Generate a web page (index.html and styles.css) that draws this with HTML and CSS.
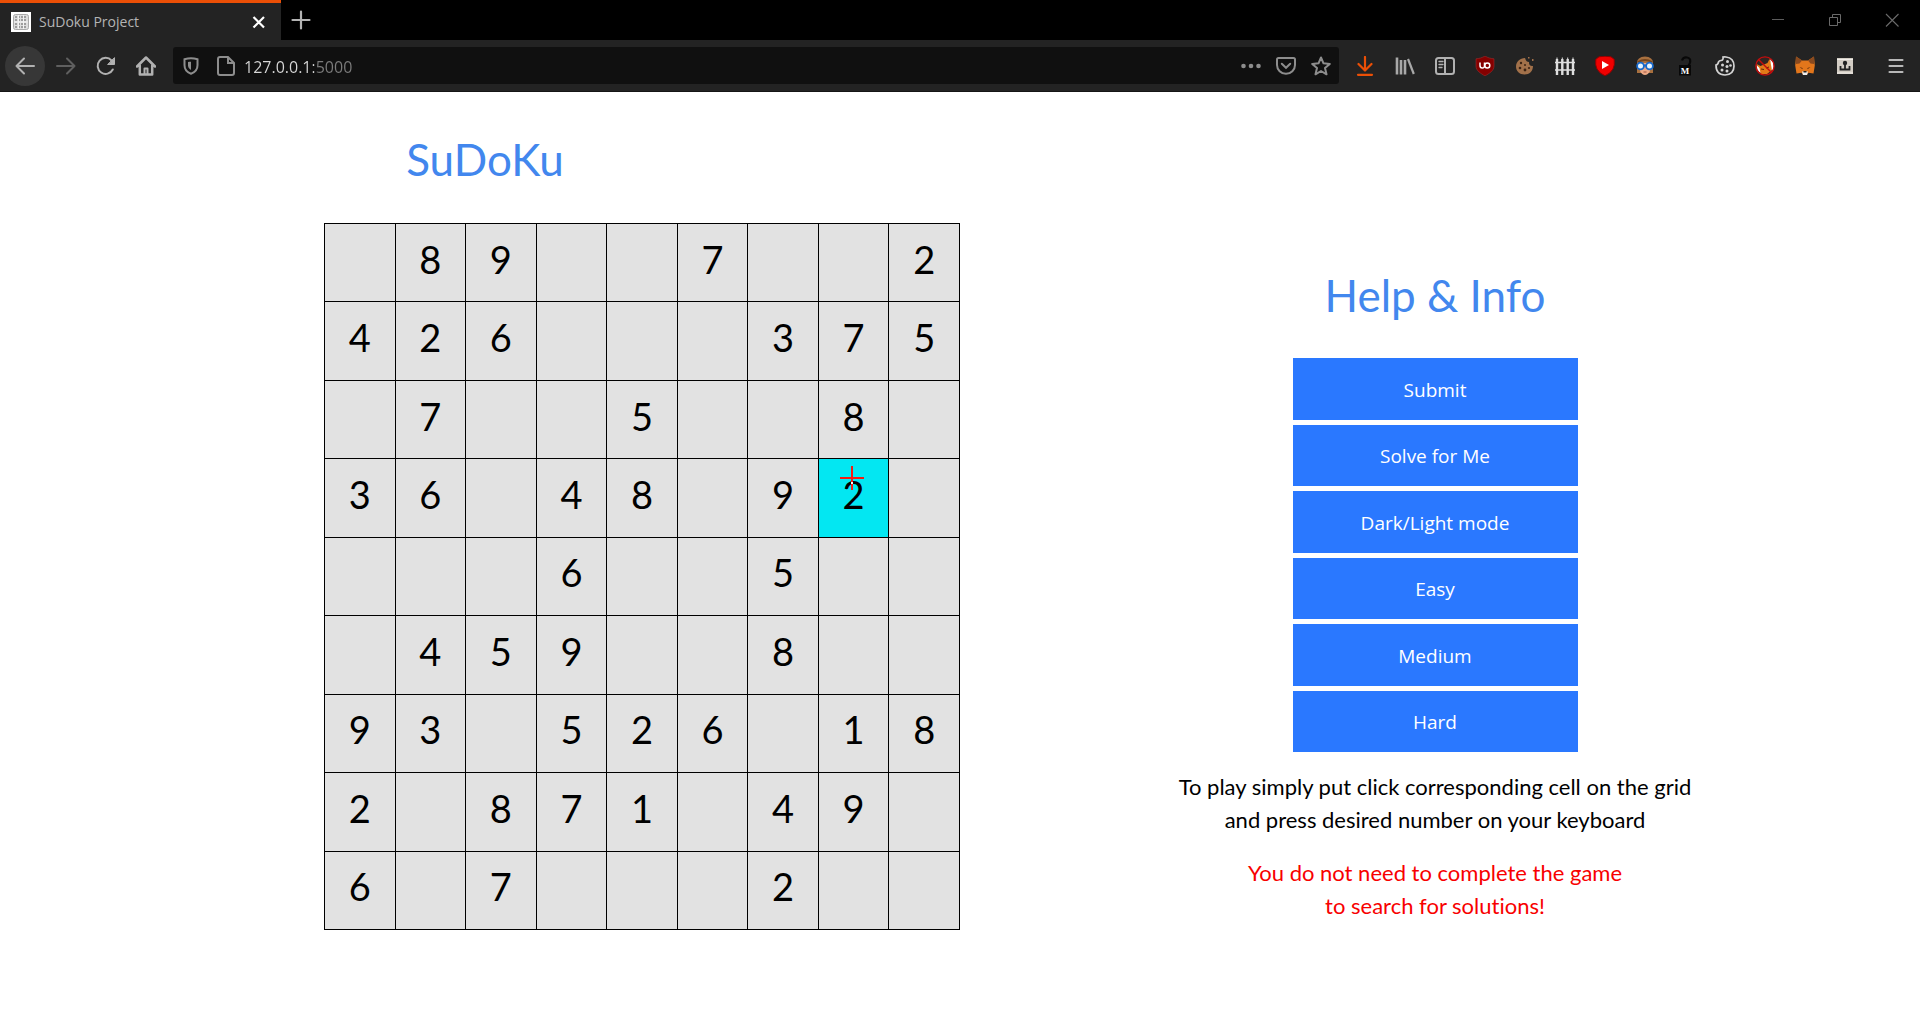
FILE: index.html
```html
<!DOCTYPE html>
<html lang="en">
<head>
<meta charset="utf-8">
<title>SuDoku Project</title>
<link rel="stylesheet" href="styles.css">
</head>
<body>
<header class="browser">
  <div class="tabbar">
    <div class="tab">
      <svg class="icon" viewBox="0 0 20 20"><path fill="#fff" d="M0 0h20v20H0z"/><rect x="2.5" y="2.5" width="15" height="15" rx="2" fill="#ddd" stroke="#aaa"/><path d="M4 5h12M4 8h12M4 12h12M4 15h12" stroke="#888" stroke-width="1.5" stroke-dasharray="2 1"/><path d="M7.5 3v14M12.500 3v14M3 10h14" stroke="#f4f4f4"/></svg>
      <span class="tab-title">SuDoku Project</span>
      <button class="bare" aria-label="Close tab"><svg class="icon" viewBox="0 0 20 20"><path d="M4.500 5 15 15.500M15 5 4.500 15.500" stroke="#fff" stroke-width="2.200" fill="none"/></svg></button>
    </div>
    <button class="bare new-tab" aria-label="New tab"><svg class="icon" viewBox="0 0 20 20"><path d="M10 1.500v17M1.500 10h17" stroke="#b4b4b4" stroke-width="2.200" stroke-linecap="round"/></svg></button>
    <div class="window-controls">
      <button class="bare" aria-label="Minimize"><svg class="icon" viewBox="0 0 20 20"><path d="M4 9.500h12" stroke="#5c5c5c"/></svg></button>
      <button class="bare" aria-label="Restore"><svg class="icon" viewBox="0 0 20 20"><path d="M4.500 7.500h8v8h-8zM7.500 7.500v-3h8v8h-3" stroke="#6a6a6a" fill="none"/></svg></button>
      <button class="bare" aria-label="Close"><svg class="icon" viewBox="0 0 20 20"><path d="m4 4 12.500 12.500M16.500 4 4 16.500" stroke="#6a6a6a" stroke-width="1.100"/></svg></button>
    </div>
  </div>
  <div class="toolbar">
    <nav class="nav-buttons">
      <button class="bare back" aria-label="Back"><svg class="icon line" viewBox="0 0 20 20"><path d="M19 10H1.500M9 2.500 1.500 10 9 17.500"/></svg></button>
      <button class="bare" aria-label="Forward"><svg class="icon line dim" viewBox="0 0 20 20"><path d="M1 10h17.500M11 2.500l7.500 7.500-7.500 7.500"/></svg></button>
      <button class="bare" aria-label="Reload"><svg class="icon line" viewBox="0 0 20 20"><path d="M16.800 13.500A8 8 0 1 1 15.600 4.500L18 7"/><path d="M18.500 2v6.500H12z" fill="#b1b1b1" stroke-width="1"/></svg></button>
      <button class="bare" aria-label="Home"><svg class="icon line" viewBox="0 0 20 20"><path d="M1 10.500 10 1.500l9 9M3.800 9.500V18.500h12.400V9.500" stroke-width="2.500"/><path d="M8.500 18v-5.500h3V18"/></svg></button>
    </nav>
    <div class="urlbar">
      <button class="bare" aria-label="Tracking protection"><svg class="icon muted" viewBox="0 0 20 20"><path d="M10 2.200c2.300 0 4.500.4 6.500 1v6c0 4-2.500 7-6.500 8.500C6 16.200 3.500 13.200 3.500 9.200v-6c2-.6 4.200-1 6.500-1z"/><path d="M10 5.800c-1.200 0-2 .1-3 .3v3.200c0 2 1.200 3.600 3 4.600z" fill="#8d8d8d" stroke="none"/></svg></button>
      <button class="bare" aria-label="Site information"><svg class="icon muted" viewBox="0 0 20 20"><path d="M4 1h8l6 6v10a2 2 0 0 1-2 2H4a2 2 0 0 1-2-2V3a2 2 0 0 1 2-2zM12 1v6h6"/></svg></button>
      <input class="address" type="text" aria-label="Address" value="127.0.0.1:5000">
      <button class="bare" aria-label="Page actions"><svg class="icon" viewBox="0 0 20 20" fill="#8d8d8d"><circle cx="2.500" cy="10" r="2.300"/><circle cx="10" cy="10" r="2.300"/><circle cx="17.500" cy="10" r="2.300"/></svg></button>
      <button class="bare" aria-label="Save to Pocket"><svg class="icon muted" viewBox="0 0 20 20"><path d="M2.500 2h15a1.500 1.500 0 0 1 1.500 1.500V9a9 8.800 0 0 1-18 0V3.500A1.500 1.500 0 0 1 2.500 2z"/><path d="m5.800 7.800 4.200 4 4.200-4" stroke-linecap="round"/></svg></button>
      <button class="bare" aria-label="Bookmark"><svg class="icon muted" viewBox="0 0 20 20"><path d="m10 1.500 2.500 5.800 6.300.6-4.800 4.200 1.500 6.200-5.500-3.300-5.500 3.300L6 12.100 1.200 7.900l6.300-.6z" stroke-linejoin="round"/></svg></button>
    </div>
    <div class="extensions">
      <button class="bare" aria-label="Downloads"><svg class="icon" viewBox="0 0 20 20"><path d="M10 1v13M3.500 8 10 14.500 16.500 8M3 18.800h14" fill="none" stroke="#eb4f06" stroke-width="2.200" stroke-linecap="round" stroke-linejoin="round"/></svg></button>
      <button class="bare" aria-label="Library"><svg class="icon" viewBox="0 0 20 20"><path d="M2 1.500v17M6 4v14.500M10 4v14.500" stroke="#a8a8a8" stroke-width="2.600"/><path d="m13 3 5.800 15" stroke="#a8a8a8" stroke-width="2.200"/></svg></button>
      <button class="bare" aria-label="Sidebars"><svg class="icon line" viewBox="0 0 20 20"><rect x="1" y="2" width="18" height="16" rx="2.500"/><path d="M10 2v16"/><path d="M4 5.500h4M4 8.500h4M4 11.500h3" stroke-width="1.300"/></svg></button>
      <button class="bare" aria-label="Ad blocker"><svg class="icon" viewBox="0 0 20 20"><path d="M10 0c3 1.800 5.500 2.500 9 2.800v7.200c0 5-5 7.500-9 10-4-2.500-9-5-9-10V2.800C4.500 2.500 7 1.800 10 0z" fill="#850000" stroke="#a33" stroke-width=".5"/><path d="M5 6.500v3q0 2.500 2.300 2.500T9.500 9.500v-3" fill="none" stroke="#fff" stroke-width="1.500"/><circle cx="12.300" cy="9.500" r="2.500" fill="none" stroke="#fff" stroke-width="1.500"/></svg></button>
      <button class="bare" aria-label="Cookie cleaner"><svg class="icon" viewBox="0 0 20 20"><path d="M10 2c1 3 2 4 4 4 0 3 1 4 4 4 0 5-3.500 8.500-8.500 8.500S1 15 1 10.500 5 2 10 2z" fill="#a2714a"/><g fill="#3c2415"><circle cx="6" cy="7" r="1.200"/><circle cx="10" cy="9" r="1"/><circle cx="5" cy="12" r="1.300"/><circle cx="10" cy="14" r="1.400"/><circle cx="14" cy="12" r="1.100"/></g><path d="M13 1h1.500v1.500H13zM17 3h1.500v2H17z" fill="#a2714a"/></svg></button>
      <button class="bare" aria-label="Fence"><svg class="icon" viewBox="0 0 20 20"><path d="M2 3v16M7.300 3v16M12.700 3v16M18 3v16" stroke="#dedede" stroke-width="2.400"/><path d="M2 1.500V3M7.300 1.500V3M12.700 1.500V3M18 1.500V3" stroke="#dedede"/><path d="M0 6.500h20M0 14h20" stroke="#dedede" stroke-width="1.500"/></svg></button>
      <button class="bare" aria-label="Video blocker"><svg class="icon" viewBox="0 0 20 20"><path d="M4 .8Q10-.5 16 .8l3.200 2.500q.8 6-1.200 9.700Q15 18 10 19.700 5 18 2 13 0 9.300.8 3.300z" fill="#f00000" stroke="#8e0000"/><path d="m7 5 7 4-7 4z" fill="#fff"/></svg></button>
      <button class="bare" aria-label="Disguise"><svg class="icon" viewBox="0 0 20 20"><path d="M2 17V7q0-6 8-6.500Q18 1 18 7v10z" fill="#a8703f"/><path d="M5 7h10v8q-2 4-5 4t-5-4z" fill="#eda985"/><path d="M3 6q7-4 14 0" stroke="#74451f" stroke-width="2" fill="none"/><g fill="#e8f4ff" stroke="#1769cc" stroke-width="1.800"><circle cx="5.500" cy="10" r="3.400"/><circle cx="14.500" cy="10" r="3.400"/></g><path d="M8.500 9.500h3" stroke="#1769cc" stroke-width="2"/><path d="M8.500 16h3" stroke="#9b5240"/></svg></button>
      <button class="bare" aria-label="Unlock"><svg class="icon" viewBox="0 0 20 20"><path d="M7 4.500Q8 1 12 1.500q4 .5 3 5-.5 2-1.500 3" fill="none" stroke="#080808" stroke-width="2.200"/><path d="M4 9h12v10.500H4z" fill="#080808"/><text x="10" y="17.500" class="unlock-letter">M</text></svg></button>
      <button class="bare" aria-label="Cookie consent"><svg class="icon" viewBox="0 0 20 20"><path d="M8 1Q8.500 4.500 6 4.500T3 7.500Q2 9 1 9q0 10 9 10 9-.5 9-9 0-8-8-9-1.500-.2-3 0z" fill="none" stroke="#d4d4d4" stroke-width="1.700"/><g fill="#d4d4d4"><circle cx="12.500" cy="5.500" r="1.500"/><circle cx="7.500" cy="9" r="1.500"/><circle cx="12" cy="10.500" r="1.500"/><circle cx="15.500" cy="9.500" r="1.300"/><circle cx="7" cy="14" r="1.500"/><circle cx="12" cy="15" r="1.500"/></g></svg></button>
      <button class="bare" aria-label="Fox blocked"><svg class="icon" viewBox="0 0 20 20"><circle cx="10" cy="10" r="9" fill="#302522"/><path d="m1.500 8 4 2 7-3 2-4 2 5 .5 6-5 4H6z" fill="#e27a18"/><path d="m1.500 9 3 3 1 5-3-3zM15 3l3 3 1 6-2 3z" fill="#fff"/><path d="m6 13 3 .5M11 12l3-1" stroke="#5b2b0b"/><circle cx="10" cy="10" r="9.100" fill="none" stroke="#c40d0d" stroke-width="1.400"/><path d="m3.500 3.500 13 13" stroke="#c40d0d" stroke-width="1.400"/></svg></button>
      <button class="bare" aria-label="Wallet"><svg class="icon" viewBox="0 0 20 20"><path d="m1 .5 6 4h6l6-4 .8 9-1.300 8-5-.8-1.500 2H8l-1.500-2-5 .8L.2 9.500z" fill="#e2761b"/><path d="m1 .5 6 4-2.500 3L1 8zM19 .5l-6 4 2.500 3L19 8z" fill="#8a4a1f"/><path d="m4.500 11 3 1v1.200zM15.500 11l-3 1v1.200z" fill="#572b10"/><path d="M7 15.500h6l-1 3.500H8z" fill="#eee"/><path d="M8.500 15h3v1.500h-3z" fill="#222"/></svg></button>
      <button class="bare" aria-label="Archive"><svg class="icon" viewBox="0 0 20 20"><path d="M2 2h16v16H2z" fill="#d3cdc4"/><path d="M2 3.500h16M2 17h16" stroke="#f1eee9"/><path d="M5.500 10v3.500h9V10M10 7v6" fill="none" stroke="#222" stroke-width="1.800"/><circle cx="10" cy="7" r="2.200" fill="#222"/></svg></button>
    </div>
    <button class="bare menu" aria-label="Menu"><svg class="icon" viewBox="0 0 20 20"><path d="M3.500 4h13M3.500 10h13M3.500 16h13" stroke="#b8b8b8" stroke-width="2.100" stroke-linecap="round"/></svg></button>
  </div>
</header>

<main class="page">
  <section class="game">
    <h1 class="title">SuDoKu</h1>
    <table class="board" aria-label="Sudoku grid">
      <tbody>
        <tr><td></td><td>8</td><td>9</td><td></td><td></td><td>7</td><td></td><td></td><td>2</td></tr>
        <tr><td>4</td><td>2</td><td>6</td><td></td><td></td><td></td><td>3</td><td>7</td><td>5</td></tr>
        <tr><td></td><td>7</td><td></td><td></td><td>5</td><td></td><td></td><td>8</td><td></td></tr>
        <tr><td>3</td><td>6</td><td></td><td>4</td><td>8</td><td></td><td>9</td><td class="selected">2<svg class="crosshair" viewBox="0 0 24 24"><path d="M12 0v24M0 12h24" stroke="#f51b12" stroke-width="2"/><path d="M11 16h2v2h-2z" fill="#fff"/></svg></td><td></td></tr>
        <tr><td></td><td></td><td></td><td>6</td><td></td><td></td><td>5</td><td></td><td></td></tr>
        <tr><td></td><td>4</td><td>5</td><td>9</td><td></td><td></td><td>8</td><td></td><td></td></tr>
        <tr><td>9</td><td>3</td><td></td><td>5</td><td>2</td><td>6</td><td></td><td>1</td><td>8</td></tr>
        <tr><td>2</td><td></td><td>8</td><td>7</td><td>1</td><td></td><td>4</td><td>9</td><td></td></tr>
        <tr><td>6</td><td></td><td>7</td><td></td><td></td><td></td><td>2</td><td></td><td></td></tr>
      </tbody>
    </table>
  </section>
  <section class="info">
    <h2 class="title">Help &amp; Info</h2>
    <div class="actions">
      <button class="action">Submit</button>
      <button class="action">Solve for Me</button>
      <button class="action">Dark/Light mode</button>
      <button class="action">Easy</button>
      <button class="action">Medium</button>
      <button class="action">Hard</button>
    </div>
    <p class="note">To play simply put click corresponding cell on the grid<br>and press desired number on your keyboard</p>
    <p class="note warning">You do not need to complete the game<br>to search for solutions!</p>
  </section>
</main>
</body>
</html>
```
FILE: styles.css
```css
* { box-sizing: border-box; }

body {
  margin: 0;
  background: #fff;
  color: #000;
  font-family: Lato, "Open Sans", sans-serif;
  font-variant-ligatures: none;
}

/* Browser frame */
.browser { font-family: "Open Sans", "Noto Sans", sans-serif; }

.bare {
  display: flex;
  align-items: center;
  justify-content: center;
  flex: none;
  padding: 0;
  border: 0;
  background: none;
}

.icon { display: block; flex: none; width: 20px; height: 20px; }
.line { fill: none; stroke: #b1b1b1; stroke-width: 2; stroke-linecap: round; stroke-linejoin: round; }
.dim { stroke: #5f5f5f; }
.muted { fill: none; stroke: #8d8d8d; stroke-width: 2; }
.unlock-letter { font: bold 9px "Liberation Serif", serif; fill: #fff; text-anchor: middle; }

.tabbar { display: flex; height: 40px; background: #000; }

.tab {
  display: flex;
  align-items: center;
  gap: 8px;
  width: 281px;
  padding: 0 12px 0 11px;
  border-top: 3px solid #eb4f06;
  background: #232323;
}

.tab-title { flex: 1; color: #b4b4b4; font-size: 14px; }
.new-tab { width: 40px; }
.window-controls { display: flex; margin-left: auto; }
.window-controls .bare { width: 57px; }

.toolbar {
  display: flex;
  align-items: center;
  height: 52px;
  padding: 0 14px 0 5px;
  border-bottom: 1px solid #151515;
  background: #232323;
}

.nav-buttons { display: flex; width: 168px; }
.nav-buttons .bare { width: 40px; height: 40px; }
.nav-buttons .back { margin-right: 1px; border-radius: 50%; background: #373737; }

.urlbar {
  display: flex;
  flex: 1;
  align-items: center;
  gap: 15px;
  height: 37px;
  padding: 0 8px;
  border-radius: 3px;
  background: #101010;
}

.address {
  flex: 1;
  min-width: 0;
  margin-left: -7px;
  padding: 2px 0 0;
  border: 0;
  outline: 0;
  background: linear-gradient(90deg, #d8d8d8 70px, #7c7c7c 70px);
  background-clip: text;
  color: transparent;
  font: 16px "Open Sans", "Noto Sans", sans-serif;
}

.extensions { display: flex; gap: 20px; margin: 0 31px 0 16px; }
.menu { width: 20px; }

/* Page */
.page { display: grid; grid-template-columns: 1fr 1fr; }

.title {
  margin: 0;
  color: #4287ee;
  font-size: 44px;
  font-weight: 400;
  line-height: 50px;
  text-align: center;
}

.game { padding-top: 42px; }
.game .title { padding-left: 10px; }

.board {
  width: 66.25%;
  height: 707px;
  margin: 39px 0 0 auto;
  border-collapse: collapse;
  table-layout: fixed;
}

.board td {
  position: relative;
  padding: 0 0 8px;
  border: 1px solid #000;
  background: #e2e2e2;
  font-size: 38px;
  line-height: 48px;
  text-align: center;
}

.board .selected { background: #03e7f2; }
.crosshair { position: absolute; top: 7px; left: 21px; width: 24px; height: 24px; }

.info {
  display: flex;
  flex-direction: column;
  align-items: center;
  padding: 178px 10px 0 0;
}

.actions {
  display: grid;
  grid-auto-rows: 1fr;
  gap: 5px;
  width: 30%;
  min-height: 394px;
  margin: 38px 0 18px;
}

.action {
  padding: 2px 0 0;
  border: 0;
  background: #2a78ff;
  color: #fff;
  font: 19px "Open Sans", "Noto Sans", sans-serif;
}

.note {
  margin: 0 0 20px;
  font-size: 22px;
  line-height: 33px;
  text-align: center;
}

.warning { color: #f80000; }
```
